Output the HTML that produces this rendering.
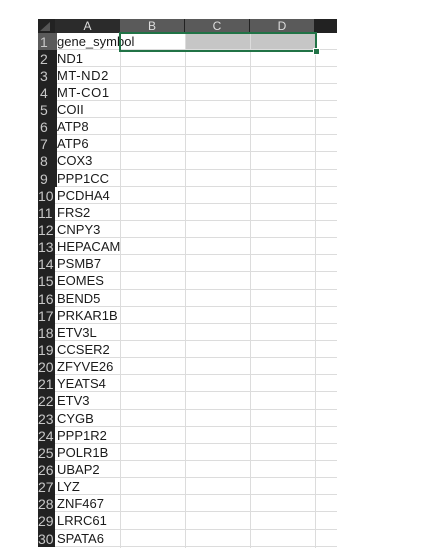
<!DOCTYPE html>
<html><head><style>
body{margin:0;width:437px;height:556px;background:#fff;position:relative;overflow:hidden;font-family:"Liberation Sans",sans-serif;}
.hdr{position:absolute;top:19px;height:13.5px;left:38px;width:299px;background:#222;}
.h{position:absolute;top:0;height:13.5px;color:#ddd;font-size:12px;line-height:14px;text-align:center;}
.grid{position:absolute;top:32.5px;left:38px;width:299px;}
.r{height:17.15px;position:relative;box-sizing:border-box;border-bottom:1px solid #dcdcdc;}
.n{position:absolute;left:0;top:0;width:17px;height:17.15px;background:#222;color:#c8c8c8;font-size:14px;line-height:18px;overflow:hidden;direction:rtl;text-align:left;}
.n span{direction:ltr;unicode-bidi:bidi-override;}
.t{position:absolute;left:19px;top:0;font-size:13px;line-height:18px;color:#1a1a1a;white-space:nowrap;}
.v{position:absolute;top:32.5px;height:515px;width:1px;background:#dcdcdc;}
</style></head><body>
<div class="hdr">
<div class="h" style="left:17px;width:65px;background:#2b2b2b">A</div>
<div class="h" style="left:82px;width:64px;background:#5a5a5a">B</div>
<div class="h" style="left:147px;width:64px;background:#5a5a5a">C</div>
<div class="h" style="left:212px;width:64px;background:#5a5a5a">D</div>
<div style="position:absolute;left:2px;top:3px;width:0;height:0;border-left:10px solid transparent;border-bottom:9px solid #555"></div>
</div>
<div style="position:absolute;left:185px;top:32.5px;width:130px;height:17px;background:#c6c6c6"></div>
<div class="v" style="left:120px"></div>
<div class="v" style="left:185px"></div>
<div class="v" style="left:250px"></div>
<div class="v" style="left:315px"></div>
<div class="grid">
<div class="r"><div class="n" style="background:#5a5a5a;direction:ltr;padding-left:2px">1</div><div class="t">gene_symbol</div></div>
<div class="r"><div class="n" style="direction:ltr;padding-left:2px">2</div><div class="t">ND1</div></div>
<div class="r"><div class="n" style="direction:ltr;padding-left:2px">3</div><div class="t" style="letter-spacing:0.6px">MT-ND2</div></div>
<div class="r"><div class="n" style="direction:ltr;padding-left:2px">4</div><div class="t" style="letter-spacing:0.6px">MT-CO1</div></div>
<div class="r"><div class="n" style="direction:ltr;padding-left:2px">5</div><div class="t">COII</div></div>
<div class="r"><div class="n" style="direction:ltr;padding-left:2px">6</div><div class="t">ATP8</div></div>
<div class="r"><div class="n" style="direction:ltr;padding-left:2px">7</div><div class="t">ATP6</div></div>
<div class="r"><div class="n" style="direction:ltr;padding-left:2px">8</div><div class="t">COX3</div></div>
<div class="r"><div class="n" style="direction:ltr;padding-left:2px">9</div><div class="t">PPP1CC</div></div>
<div class="r"><div class="n"><span>10</span></div><div class="t">PCDHA4</div></div>
<div class="r"><div class="n"><span>11</span></div><div class="t">FRS2</div></div>
<div class="r"><div class="n"><span>12</span></div><div class="t">CNPY3</div></div>
<div class="r"><div class="n"><span>13</span></div><div class="t">HEPACAM</div></div>
<div class="r"><div class="n"><span>14</span></div><div class="t">PSMB7</div></div>
<div class="r"><div class="n"><span>15</span></div><div class="t">EOMES</div></div>
<div class="r"><div class="n"><span>16</span></div><div class="t">BEND5</div></div>
<div class="r"><div class="n"><span>17</span></div><div class="t">PRKAR1B</div></div>
<div class="r"><div class="n"><span>18</span></div><div class="t">ETV3L</div></div>
<div class="r"><div class="n"><span>19</span></div><div class="t">CCSER2</div></div>
<div class="r"><div class="n"><span>20</span></div><div class="t">ZFYVE26</div></div>
<div class="r"><div class="n"><span>21</span></div><div class="t">YEATS4</div></div>
<div class="r"><div class="n"><span>22</span></div><div class="t">ETV3</div></div>
<div class="r"><div class="n"><span>23</span></div><div class="t">CYGB</div></div>
<div class="r"><div class="n"><span>24</span></div><div class="t">PPP1R2</div></div>
<div class="r"><div class="n"><span>25</span></div><div class="t">POLR1B</div></div>
<div class="r"><div class="n"><span>26</span></div><div class="t">UBAP2</div></div>
<div class="r"><div class="n"><span>27</span></div><div class="t">LYZ</div></div>
<div class="r"><div class="n"><span>28</span></div><div class="t">ZNF467</div></div>
<div class="r"><div class="n"><span>29</span></div><div class="t">LRRC61</div></div>
<div class="r"><div class="n"><span>30</span></div><div class="t">SPATA6</div></div>
</div>
<div style="position:absolute;left:119px;top:32px;width:194px;height:16px;border:2px solid #217346"></div>
<div style="position:absolute;left:313px;top:48px;width:5px;height:5px;background:#217346;border:1px solid #fff"></div>
</body></html>
